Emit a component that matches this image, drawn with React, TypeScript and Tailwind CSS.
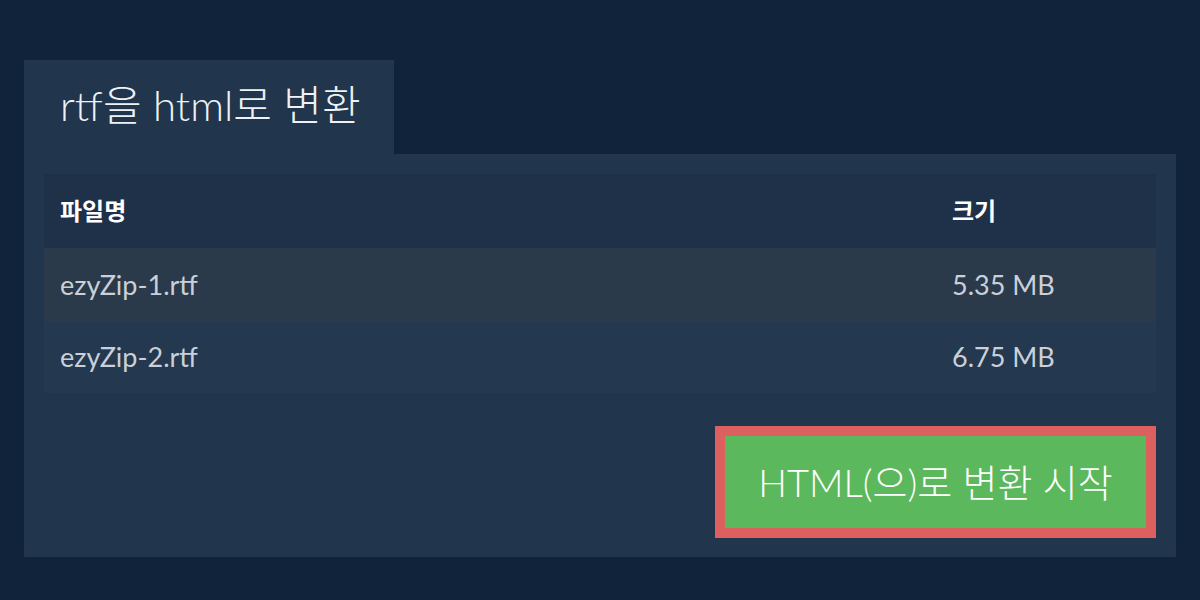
const FONT = { fontFamily: 'Lato, "Noto Sans CJK KR", sans-serif' };

const files = [
  { name: "ezyZip-1.rtf", size: "5.35 MB", bg: "bg-[#2b3a4b]", h: "h-[74px]" },
  { name: "ezyZip-2.rtf", size: "6.75 MB", bg: "bg-[#243850]", h: "h-[71px]" },
];

export default function App() {
  return (
    <div className="w-[1200px] h-[600px] bg-[#10233a] px-6 pt-[60px]" style={FONT}>
      {/* Tab */}
      <div className="w-[370px] h-[94px] bg-[#21354d] flex items-center pl-9">
        <h1 className="text-[42px] font-light text-[#eef2f5] leading-none -mt-1">rtf을 html로 변환</h1>
      </div>

      {/* Panel */}
      <div className="bg-[#21354d] px-5 pt-5 pb-[19px]">
        <table className="w-full border-collapse">
          <thead>
            <tr className="bg-[#1f3148] h-[74px]">
              <th className="w-[908px] text-left pl-4 text-[24px] font-bold text-white">파일명</th>
              <th className="text-left text-[24px] font-bold text-white">크기</th>
            </tr>
          </thead>
          <tbody>
            {files.map((f) => (
              <tr key={f.name} className={`${f.bg} ${f.h}`}>
                <td className="pl-4 text-[27px] text-[#c9d0d8]">{f.name}</td>
                <td className="text-[27px] text-[#c9d0d8]">{f.size}</td>
              </tr>
            ))}
          </tbody>
        </table>

        <div className="flex justify-end mt-[33px]">
          <button className="w-[441px] h-[112px] border-[10px] border-[#dc605d] bg-[#5cb85c] text-white text-[38px] font-light flex items-center justify-center">
            HTML(으)로 변환 시작
          </button>
        </div>
      </div>
    </div>
  );
}
